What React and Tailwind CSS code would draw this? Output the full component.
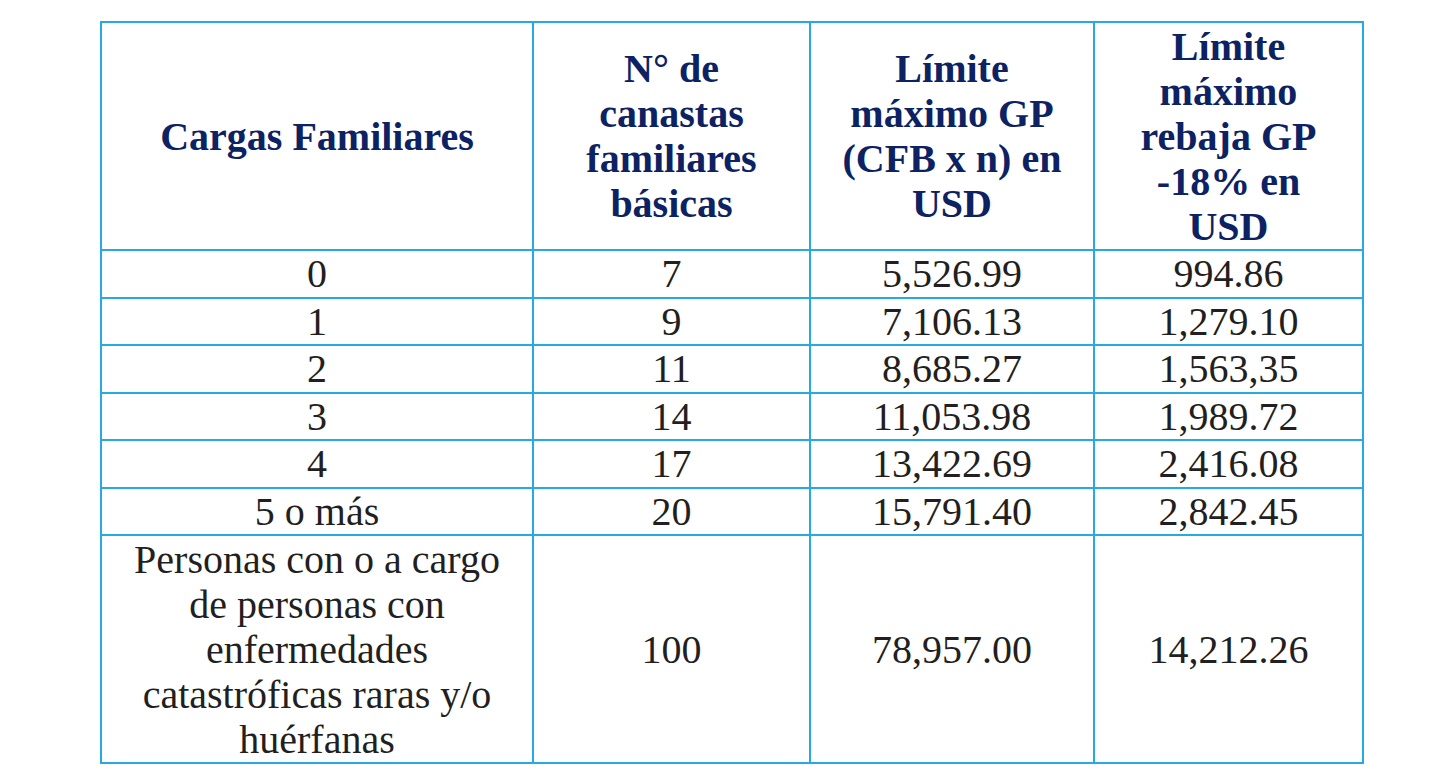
export default function App() {
  const rows = [
    ["0", "7", "5,526.99", "994.86"],
    ["1", "9", "7,106.13", "1,279.10"],
    ["2", "11", "8,685.27", "1,563,35"],
    ["3", "14", "11,053.98", "1,989.72"],
    ["4", "17", "13,422.69", "2,416.08"],
    ["5 o más", "20", "15,791.40", "2,842.45"],
  ];
  const th = "border-2 border-[#27aae3] text-center align-middle font-bold text-[#0c2263] px-2";
  const td = "border-2 border-[#27aae3] text-center align-middle text-[#231f20] p-0";
  return (
    <div className="w-[1432px] h-[784px] bg-white overflow-hidden pt-[21px] pl-[100px]" style={{ fontFamily: '"Liberation Serif", "Times New Roman", serif' }}>
      <table className="border-collapse table-fixed w-[1262px] text-[40px] leading-[45px]">
        <colgroup>
          <col className="w-[432px]" />
          <col className="w-[277px]" />
          <col className="w-[284px]" />
          <col className="w-[269px]" />
        </colgroup>
        <thead>
          <tr className="h-[228px]">
            <th className={th}>Cargas Familiares</th>
            <th className={th}>N° de<br />canastas<br />familiares<br />básicas</th>
            <th className={th}>Límite<br />máximo GP<br />(CFB x n) en<br />USD</th>
            <th className={th}>Límite<br />máximo<br />rebaja GP<br />-18% en<br />USD</th>
          </tr>
        </thead>
        <tbody>
          {rows.map((r, i) => (
            <tr key={i} className="h-[47.5px]">
              <td className={td}>{r[0]}</td>
              <td className={td}>{r[1]}</td>
              <td className={td}>{r[2]}</td>
              <td className={td}>{r[3]}</td>
            </tr>
          ))}
          <tr className="h-[228px]">
            <td className={td}>Personas con o a cargo<br />de personas con<br />enfermedades<br />catastróficas raras y/o<br />huérfanas</td>
            <td className={td}>100</td>
            <td className={td}>78,957.00</td>
            <td className={td}>14,212.26</td>
          </tr>
        </tbody>
      </table>
    </div>
  );
}
